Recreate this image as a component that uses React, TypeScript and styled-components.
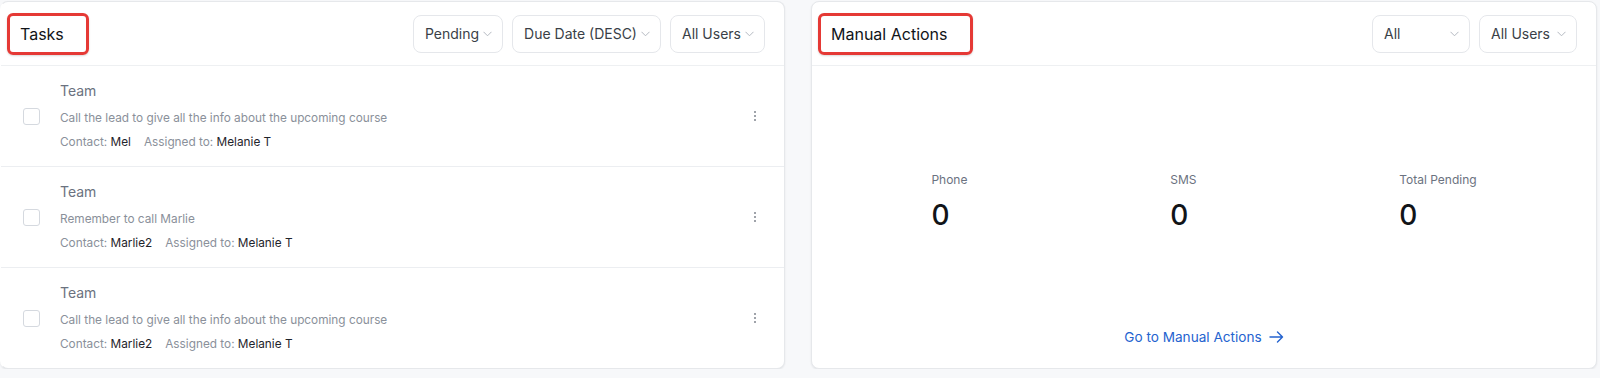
import React from 'react';
import styled, { createGlobalStyle } from 'styled-components';

const GlobalStyle = createGlobalStyle`
  html, body {
    margin: 0;
    padding: 0;
    background: #f7f8fa;
    font-family: Inter, "Noto Sans", "Liberation Sans", sans-serif;
  }
  * { box-sizing: border-box; }
`;

const Page = styled.div`
  display: grid;
  grid-template-columns: 785px 786px;
  gap: 26px;
  padding: 1px 3px 0 0;
  align-items: start;
`;

const Card = styled.section<{ $flushLeft?: boolean }>`
  background: #fff;
  border: 1px solid #e6e8eb;
  border-left-color: ${({ $flushLeft }) => ($flushLeft ? 'transparent' : '#e6e8eb')};
  border-radius: 8px;
  box-shadow: 0 1px 2px rgba(16, 24, 40, 0.08);
  height: 368px;
  display: flex;
  flex-direction: column;
  overflow: hidden;
`;

const CardHeader = styled.header`
  height: 64px;
  flex-shrink: 0;
  display: flex;
  align-items: center;
  justify-content: space-between;
  padding: 0 19px 0 6px;
  border-bottom: 1px solid #eef0f2;
`;

const Title = styled.h2<{ $padRight: number }>`
  margin: 0;
  height: 42px;
  display: flex;
  align-items: center;
  padding: 0 ${({ $padRight }) => $padRight}px 0 10px;
  border: 3px solid #e53935;
  border-radius: 6px;
  font-size: 16px;
  font-weight: 400;
  color: #111418;
  box-shadow: 0 1px 2px rgba(0, 0, 0, 0.15);
`;

const Filters = styled.div`
  display: flex;
  gap: 9px;
`;

const Select = styled.button<{ $width?: number }>`
  height: 38px;
  width: ${({ $width }) => ($width ? `${$width}px` : 'auto')};
  display: flex;
  align-items: center;
  justify-content: space-between;
  gap: 4px;
  padding: 0 10px 0 11px;
  background: #fff;
  border: 1px solid #e5e7eb;
  border-radius: 8px;
  font-family: inherit;
  font-size: 14px;
  color: #3a3f47;
`;

const Chevron = () => (
  <svg width="9" height="6" viewBox="0 0 9 6" fill="none">
    <polyline points="0.5,0.8 4.5,4.8 8.5,0.8" stroke="#b4b9c1" strokeWidth="1" />
  </svg>
);

const TaskList = styled.ul`
  list-style: none;
  margin: 0;
  padding: 0;
`;

const TaskRow = styled.li`
  display: flex;
  align-items: center;
  padding: 15px 22px 15px 22px;
  border-bottom: 1px solid #eceef1;
  &:last-child { border-bottom: none; }
`;

const Checkbox = styled.span`
  width: 17px;
  height: 17px;
  border: 1px solid #d5d9df;
  border-radius: 3px;
  flex-shrink: 0;
  margin-right: 20px;
`;

const TaskBody = styled.div`
  flex: 1;
  display: flex;
  flex-direction: column;
`;

const TaskTitle = styled.div`
  font-size: 14px;
  line-height: 20px;
  color: #6b7280;
`;

const TaskText = styled.div`
  margin-top: 8px;
  font-size: 11.8px;
  line-height: 18px;
  color: #8a909a;
`;

const TaskMeta = styled.div`
  margin-top: 6px;
  font-size: 11.8px;
  line-height: 18px;
  color: #8a909a;
  display: flex;
  gap: 13px;
  b { font-weight: 400; color: #1f242b; }
`;

const Kebab = styled.span`
  display: flex;
  flex-direction: column;
  gap: 2px;
  padding: 0 6px;
  i {
    width: 2px;
    height: 2px;
    border-radius: 50%;
    background: #7f858e;
  }
`;

const ActionsBody = styled.div`
  flex: 1;
  display: flex;
  flex-direction: column;
  padding: 106px 18px 21px;
`;

const Stats = styled.div`
  display: flex;
  justify-content: space-around;
`;

const Stat = styled.div`
  display: flex;
  flex-direction: column;
  gap: 10px;
`;

const StatLabel = styled.div`
  font-size: 12px;
  line-height: 16px;
  color: #6b7280;
`;

const StatValue = styled.div`
  font-size: 28px;
  line-height: 34px;
  font-weight: 500;
  color: #111418;
`;

const GoLink = styled.a`
  margin-top: auto;
  align-self: center;
  display: flex;
  align-items: center;
  gap: 7px;
  font-size: 13.6px;
  line-height: 20px;
  color: #2463cf;
  text-decoration: none;
`;

const tasks = [
  { text: 'Call the lead to give all the info about the upcoming course', contact: 'Mel' },
  { text: 'Remember to call Marlie', contact: 'Marlie2' },
  { text: 'Call the lead to give all the info about the upcoming course', contact: 'Marlie2' },
];

const stats = [
  { label: 'Phone', value: 0 },
  { label: 'SMS', value: 0 },
  { label: 'Total Pending', value: 0 },
];

const App: React.FC = () => (
  <>
    <GlobalStyle />
    <Page>
      <Card $flushLeft>
        <CardHeader>
          <Title $padRight={22}>Tasks</Title>
          <Filters>
            <Select>Pending <Chevron /></Select>
            <Select>Due Date (DESC) <Chevron /></Select>
            <Select>All Users <Chevron /></Select>
          </Filters>
        </CardHeader>
        <TaskList>
          {tasks.map((t, i) => (
            <TaskRow key={i}>
              <Checkbox />
              <TaskBody>
                <TaskTitle>Team</TaskTitle>
                <TaskText>{t.text}</TaskText>
                <TaskMeta>
                  <span>Contact: <b>{t.contact}</b></span>
                  <span>Assigned to: <b>Melanie T</b></span>
                </TaskMeta>
              </TaskBody>
              <Kebab><i /><i /><i /></Kebab>
            </TaskRow>
          ))}
        </TaskList>
      </Card>

      <Card>
        <CardHeader>
          <Title $padRight={22}>Manual Actions</Title>
          <Filters>
            <Select $width={98}>All <Chevron /></Select>
            <Select $width={98}>All Users <Chevron /></Select>
          </Filters>
        </CardHeader>
        <ActionsBody>
          <Stats>
            {stats.map((s) => (
              <Stat key={s.label}>
                <StatLabel>{s.label}</StatLabel>
                <StatValue>{s.value}</StatValue>
              </Stat>
            ))}
          </Stats>
          <GoLink href="#">
            Go to Manual Actions
            <svg width="15" height="12" viewBox="0 0 15 12" fill="none">
              <path d="M1 6h12.5M8.5 1l5 5-5 5" stroke="#2463cf" strokeWidth="1.4" strokeLinecap="round" strokeLinejoin="round" />
            </svg>
          </GoLink>
        </ActionsBody>
      </Card>
    </Page>
  </>
);

export default App;
